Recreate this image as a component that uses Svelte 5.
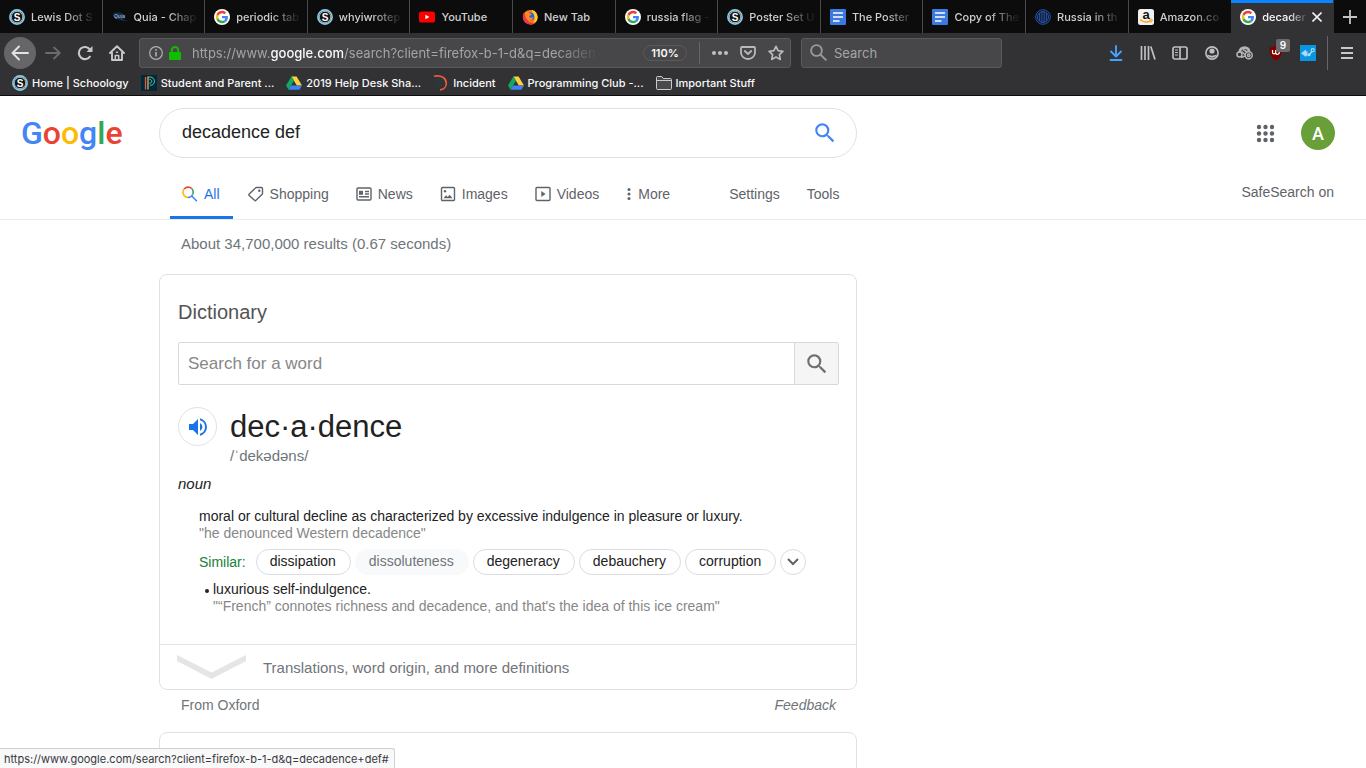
<script>
  const tabs = [
    { icon: 'schoology', title: 'Lewis Dot S' },
    { icon: 'quia', title: 'Quia - Chap' },
    { icon: 'google', title: 'periodic tab' },
    { icon: 'schoology', title: 'whyiwrotep' },
    { icon: 'youtube', title: 'YouTube', whole: true },
    { icon: 'firefox', title: 'New Tab', whole: true },
    { icon: 'google', title: 'russia flag -' },
    { icon: 'schoology', title: 'Poster Set U' },
    { icon: 'docs', title: 'The Poster' },
    { icon: 'docs', title: 'Copy of The' },
    { icon: 'globe', title: 'Russia in th' },
    { icon: 'amazon', title: 'Amazon.co' },
    { icon: 'google', title: 'decaden', active: true }
  ];
  const bookmarks = [
    { icon: 'schoology', title: 'Home | Schoology' },
    { icon: 'powerschool', title: 'Student and Parent ...' },
    { icon: 'drive', title: '2019 Help Desk Sha...' },
    { icon: 'incident', title: 'Incident' },
    { icon: 'drive', title: 'Programming Club -...' },
    { icon: 'folder', title: 'Important Stuff' }
  ];
  const modes = [
    { icon: 'all', title: 'All', active: true },
    { icon: 'shopping', title: 'Shopping' },
    { icon: 'news', title: 'News' },
    { icon: 'images', title: 'Images' },
    { icon: 'videos', title: 'Videos' },
    { icon: 'more', title: 'More' }
  ];
  const synonyms = [
    { word: 'dissipation' },
    { word: 'dissoluteness', muted: true },
    { word: 'degeneracy' },
    { word: 'debauchery' },
    { word: 'corruption' }
  ];
  const dots = [4, 10.5, 17];
  let query = $state('decadence def');
  let word = $state('');
  let address = $state('');
</script>

{#snippet favicon(name)}
  <svg class="fav" viewBox="0 0 16 16" aria-hidden="true">
    {#if name === 'schoology'}
      <circle cx="8" cy="8" r="7.1" fill="#111" stroke="#86cdec" stroke-width="1.7" />
      <circle cx="8" cy="8" r="5.7" fill="none" stroke="#e8f6fc" stroke-width=".7" />
      <text x="8" y="11.6" text-anchor="middle" class="fav-s">S</text>
    {:else if name === 'quia'}
      <ellipse cx="7" cy="7" rx="6.5" ry="3.6" fill="#122a45" transform="rotate(12 7 7)" />
      <path d="M8 8.5c3 2.8 6 3.3 7.6 2.3-1 1.4-5.500 1.600-8.600-1.200z" fill="#17406a" />
      <text x="7.500" y="8.800" text-anchor="middle" class="fav-q">Quia</text>
    {:else if name === 'google'}
      <circle cx="8" cy="8" r="8" fill="#fff" />
      <g transform="translate(1.800 1.800) scale(.258)">
        <path fill="#ea4335" d="M24 9.500c3.540 0 6.710 1.220 9.210 3.600l6.850-6.850C35.900 2.380 30.470 0 24 0 14.620 0 6.510 5.380 2.560 13.220l7.980 6.190C12.430 13.720 17.740 9.500 24 9.500z" />
        <path fill="#4285f4" d="M46.980 24.550c0-1.570-.15-3.090-.38-4.550H24v9.020h12.940c-.58 2.960-2.260 5.480-4.780 7.180l7.730 6c4.510-4.180 7.090-10.360 7.090-17.650z" />
        <path fill="#fbbc05" d="M10.530 28.590A14.500 14.500 0 0 1 9.770 24c0-1.600.27-3.140.76-4.590l-7.980-6.190A24 24 0 0 0 0 24c0 3.880.92 7.540 2.560 10.780z" />
        <path fill="#34a853" d="M24 48c6.480 0 11.930-2.130 15.890-5.810l-7.730-6c-2.150 1.450-4.920 2.300-8.160 2.300-6.260 0-11.570-4.220-13.470-9.910l-7.980 6.190C6.510 42.620 14.620 48 24 48z" />
      </g>
    {:else if name === 'youtube'}
      <rect x="0" y="2.500" width="16" height="11" rx="2.600" fill="#f00" />
      <path d="M6.400 5.700v4.600l4-2.300z" fill="#fff" />
    {:else if name === 'firefox'}
      <circle cx="8.200" cy="8.200" r="7.300" fill="#ff7a1a" />
      <path d="M9.500.7C13.500 1.500 16 5 15.600 9c-.4 3.600-3.200 6.500-7 6.600 3-1.400 4.500-3.600 4.200-6.600-.2-2.500-1.800-3.200-2.200-5C10.300 2.700 9.900 1.700 9.500.7z" fill="#ffcb2e" />
      <path d="M1 5c-.8 5 1.500 9.500 6.500 10.400 2.800.4 5-.9 6-2.400-2.500 1.500-6 1-7.700-1.200C4 9.500 3.700 7 2.300 3.200z" fill="#f0304f" />
      <circle cx="8.300" cy="7.400" r="3.900" fill="#2563d9" />
      <path d="M3.200 3.400c1.600-.6 3.300 0 4.500 1.100 1.500 0 2 .4 1.800 1-.6.800-2 .9-2.400 2 .5 1.600 2.800 1.500 4.200.6-.4 2.400-2.600 3.800-4.900 3.100C3.900 10.300 2.700 6.500 3.200 3.400z" fill="#ff8a1f" />
    {:else if name === 'docs'}
      <rect width="16" height="16" rx="1" fill="#3b78e0" />
      <path d="M3 4h10M3 8h10M3 12h6.500" stroke="#fff" stroke-width="1.700" />
    {:else if name === 'globe'}
      <g fill="none" stroke="#2a5fc4" stroke-width=".9">
        <circle cx="8" cy="8" r="7.300" />
        <circle cx="8" cy="8" r="5.500" />
        <path d="M8 2.500v11" />
        <path d="M6.200 3v10M9.800 3v10M4.400 4.200v7.600M11.600 4.200v7.600" />
      </g>
    {:else if name === 'amazon'}
      <rect width="16" height="16" rx="2.500" fill="#f1f1f1" />
      <text x="8" y="10" text-anchor="middle" class="fav-a">a</text>
      <path d="M2 10.500c3.500 3 8 3.200 11 1.200" fill="none" stroke="#f90" stroke-width="1.500" />
      <path d="M11.300 10.500c1.200-.4 2.800-.4 2.900.1.100.7-.3 1.900-1.100 2.800" fill="none" stroke="#f90" stroke-width="1" />
    {:else if name === 'powerschool'}
      <rect width="16" height="16" fill="#00293c" />
      <path d="M4.500 2v12.500" stroke="#e9573e" stroke-width="1.300" />
      <path d="M7 14.500V2h1.500" fill="none" stroke="#f2c14e" stroke-width="1.200" />
      <path d="M8.500 2c6.500-.2 6.500 8.500.5 8.300M8.500 4.500c3-.2 3 3.700 0 3.700" fill="none" stroke="#5fc6b4" stroke-width="1" />
    {:else if name === 'drive'}
      <path d="M5.400 1.400h5.200L16 10.500h-5.200z" fill="#ffcf3f" />
      <path d="M5.400 1.400 0 10.500l2.600 4.300L8 5.800z" fill="#11a861" />
      <path d="M5.200 10.500H16l-2.600 4.300H2.600z" fill="#3f82f7" />
    {:else if name === 'incident'}
      <path d="M1 1.200c8-1.500 12.500 2.500 12.300 7.300-.1 3.500-2.800 6-6.300 6.400" fill="none" stroke="#f25b37" stroke-width="1.600" />
      <path d="M3 4h6M3 7h7M3 10h6" stroke="#1d4151" stroke-width="1.200" />
    {:else if name === 'folder'}
      <path d="M.5 13.500v-11q0-1 1-1h4.300l1.500 2h7.200q1 0 1 1v9q0 1-1 1h-13q-1 0-1-1zM.5 5.500h15" fill="#4a4a4c" stroke="#c9c9ca" />
    {/if}
  </svg>
{/snippet}

{#snippet lens(color)}
  <svg class="lens" viewBox="0 0 24 24" aria-hidden="true">
    <path fill={color} d="M15.500 14h-.79l-.28-.27A6.470 6.470 0 0 0 16 9.500 6.500 6.500 0 1 0 9.500 16c1.610 0 3.090-.59 4.230-1.570l.27.28v.79l5 4.990L20.490 19zm-6 0C7.010 14 5 11.990 5 9.500S7.010 5 9.500 5 14 7.010 14 9.500 11.990 14 9.500 14z" />
  </svg>
{/snippet}

{#snippet modeIcon(name)}
  {#if name === 'all'}
    <svg width="16" height="16" viewBox="0 0 16 16" fill="none" stroke-width="1.600" aria-hidden="true">
      <path d="M2.100 3.100A5.200 5.200 0 0 1 9.700 2.500" stroke="#ea4335" />
      <path d="M9.700 2.500a5.200 5.200 0 0 1 1.500 3.800 5.200 5.200 0 0 1-.5 2.200" stroke="#34a853" />
      <path d="M10.700 8.500a5.200 5.200 0 0 1-4.700 3M9.500 9.800l5.400 5.400" stroke="#4285f4" />
      <path d="M6 11.500A5.200 5.200 0 0 1 2.100 3.100" stroke="#fbbc05" />
    </svg>
  {:else if name === 'shopping'}
    <svg width="16" height="16" viewBox="0 0 16 16" fill="none" stroke="#5f6368" stroke-width="1.400" aria-hidden="true">
      <path d="M8.300 1.500H13.500q1 0 1 1V7.400q0 .5-.4.900L8 14.300q-.8.700-1.500 0L1.200 9.500q-.7-.8 0-1.600L7.500 1.900q.3-.4.800-.4z" />
      <circle cx="11.300" cy="4.700" r="1.200" fill="#5f6368" stroke="none" />
    </svg>
  {:else if name === 'news'}
    <svg width="16" height="16" viewBox="0 0 16 16" fill="none" stroke="#5f6368" stroke-width="1.400" aria-hidden="true">
      <rect x="1" y="2" width="14" height="12" rx="1" />
      <path d="M9 5.500h4M9 8h4M3 10.800h10" />
      <rect x="3" y="4.800" width="4" height="4" fill="#5f6368" stroke="none" />
    </svg>
  {:else if name === 'images'}
    <svg width="16" height="16" viewBox="0 0 16 16" fill="none" stroke="#5f6368" stroke-width="1.400" aria-hidden="true">
      <rect x="1.500" y="1.500" width="13" height="13" rx="1" />
      <path d="m3.500 12.300 2.600-3 1.600 1.700 2-2.200 2.800 3.500z" fill="#5f6368" stroke="none" />
      <circle cx="5" cy="5.200" r="1.200" fill="#5f6368" stroke="none" />
    </svg>
  {:else if name === 'videos'}
    <svg width="16" height="16" viewBox="0 0 16 16" fill="none" stroke="#5f6368" stroke-width="1.400" aria-hidden="true">
      <rect x="1" y="1.500" width="14" height="13" rx="1" />
      <path d="M6.300 5v6L10.500 8z" fill="#5f6368" stroke="none" />
    </svg>
  {:else}
    <svg width="6" height="16" viewBox="0 0 6 16" fill="#5f6368" aria-hidden="true">
      <circle cx="3" cy="3.500" r="1.500" /><circle cx="3" cy="8" r="1.500" /><circle cx="3" cy="12.500" r="1.500" />
    </svg>
  {/if}
{/snippet}

<div class="window">
  <header class="chrome">
    <div class="tabbar" role="tablist">
      {#each tabs as tab}
        <div class="tab" class:active={tab.active} role="tab" aria-selected={!!tab.active} tabindex="0">
          {@render favicon(tab.icon)}
          <span class="tab-title" class:whole={tab.whole}>{tab.title}</span>
          {#if tab.active}
            <button class="close" aria-label="Close tab">
              <svg width="10" height="10" viewBox="0 0 10 10" stroke="#f0f0f0" stroke-width="1.600"><path d="m.5.500 9 9M9.500.5l-9 9" /></svg>
            </button>
          {/if}
        </div>
      {/each}
      <button class="newtab" aria-label="New tab">
        <svg width="14" height="14" viewBox="0 0 14 14" stroke="#c4c4c5" stroke-width="1.800"><path d="M7 0v14M0 7h14" /></svg>
      </button>
    </div>

    <div class="toolbar">
      <div class="navbtns">
        <button class="back" aria-label="Back">
          <svg width="18" height="16" viewBox="0 0 18 16" fill="none" stroke="#e3e3e4" stroke-width="1.900" stroke-linecap="round" stroke-linejoin="round"><path d="M17 8H1.500M8 1.500 1.500 8 8 14.500" /></svg>
        </button>
        <button class="tool" aria-label="Forward">
          <svg width="16" height="14" viewBox="0 0 16 14" fill="none" stroke="#6b6b6d" stroke-width="1.800" stroke-linecap="round" stroke-linejoin="round"><path d="M1 7h13.500M9 1.500 14.800 7 9 12.500" /></svg>
        </button>
        <button class="tool" aria-label="Reload">
          <svg width="16" height="16" viewBox="0 0 16 16" fill="none" stroke="#c8c8c9" stroke-width="2.100"><path d="M13 4.600A6.100 6.100 0 1 0 13.300 11" /><path d="M15.500 1v6h-6z" fill="#c8c8c9" stroke="none" /></svg>
        </button>
        <button class="tool" aria-label="Home">
          <svg width="16" height="16" viewBox="0 0 16 16" fill="none" stroke="#c8c8c9" stroke-width="1.900" stroke-linejoin="round" stroke-linecap="round"><path d="M1 8 8 1.300 15 8M3 7.500V15h10V7.500" /><path d="M6.300 15v-4.500h3.400V15M7.500 7.300h1" stroke-width="1.500" /></svg>
        </button>
      </div>

      <div class="field urlbar">
        <svg width="14" height="14" viewBox="0 0 14 14" fill="none" stroke="#b1b1b3" aria-hidden="true"><circle cx="7" cy="7" r="6.300" stroke-width="1.200" /><path d="M7 6v4.500M7 3.300v1.500" stroke-width="1.600" /></svg>
        <svg width="12" height="14" viewBox="0 0 12 14" aria-hidden="true"><rect y="6" width="12" height="8" rx="1" fill="#12bc00" /><path d="M2.800 7V4.200a3.200 3.200 0 0 1 6.400 0V7" fill="none" stroke="#12bc00" stroke-width="1.900" /></svg>
        <span class="url">https://www.<b>google.com</b>/search?client=firefox-b-1-d&amp;q=decaden</span>
        <button class="zoom">110%</button>
        <span class="divider"></span>
        <div class="page-actions">
          <button class="page-action" aria-label="Page actions">
            <svg width="16" height="4" viewBox="0 0 16 4" fill="#c0c0c1"><circle cx="2" cy="2" r="2" /><circle cx="8" cy="2" r="2" /><circle cx="14" cy="2" r="2" /></svg>
          </button>
          <button class="page-action" aria-label="Save to Pocket">
            <svg width="16" height="14" viewBox="0 0 16 14" fill="none" stroke="#b9b9ba" stroke-width="1.800" stroke-linecap="round" stroke-linejoin="round"><path d="M2 1h12q1 0 1 1v4.500a7 6.500 0 0 1-14 0V2q0-1 1-1zM4.800 5 8 8l3.200-3" /></svg>
          </button>
          <button class="page-action" aria-label="Bookmark this page">
            <svg width="16" height="16" viewBox="0 0 16 16" fill="none" stroke="#b9b9ba" stroke-width="1.700" stroke-linejoin="round"><path d="m8 1.300 2.100 4.400 4.800.6-3.500 3.300.9 4.800L8 12.100l-4.300 2.300.9-4.800L1.100 6.300l4.800-.6z" /></svg>
          </button>
        </div>
      </div>

      <label class="field searchbar">
        <svg width="17" height="17" viewBox="0 0 17 17" fill="none" stroke="#98989a" stroke-width="1.900" stroke-linecap="round" aria-hidden="true"><circle cx="6.500" cy="6.500" r="5.400" /><path d="m10.600 10.600 5.200 5.200" /></svg>
        <input type="text" placeholder="Search" aria-label="Search the web" bind:value={address} />
      </label>

      <span class="spring"></span>

      <div class="extensions">
        <button class="tool" aria-label="Downloads">
          <svg width="14" height="16" viewBox="0 0 14 16" fill="none" stroke="#45a1ff" stroke-width="1.900" stroke-linecap="round" stroke-linejoin="round"><path d="M7 1v10M2 6.500l5 5 5-5M1.500 15h11" /></svg>
        </button>
        <button class="tool" aria-label="Library">
          <svg width="16" height="14" viewBox="0 0 16 14" stroke="#c0c0c1" stroke-width="1.700"><path d="M1.500 0v14M5 0v14M8.500 0v14M10.800.5 15 13.500" /></svg>
        </button>
        <button class="tool" aria-label="Sidebars">
          <svg width="16" height="14" viewBox="0 0 16 14" fill="none" stroke="#c0c0c1" stroke-width="1.700"><rect x="1" y="1" width="14" height="12" rx="1.800" /><path d="M8 1v12" /><path d="M3 4h3M3 6.500h3M3 9h3" stroke-width="1" /></svg>
        </button>
        <button class="tool" aria-label="Account">
          <svg width="14" height="14" viewBox="0 0 14 14" fill="none"><circle cx="7" cy="7" r="6.100" stroke="#c0c0c1" stroke-width="1.600" /><circle cx="7" cy="5" r="2.600" fill="#c0c0c1" /><path d="M2 8.500c3 1.500 7 1.500 10 0A5.500 5.500 0 0 1 2 8.500z" fill="#c0c0c1" /></svg>
        </button>
        <button class="tool" aria-label="Container extension">
          <svg width="17" height="14" viewBox="0 0 17 14" fill="none" stroke="#b4b4b5" stroke-width="1.500"><path d="M3.500 6.500C4 3 6 1.600 8.500 1.600c3 0 4.500 2 4.500 4" stroke-width="2.800" /><circle cx="3.500" cy="8.500" r="2.500" /><circle cx="12.700" cy="9.300" r="3.500" /><circle cx="12.700" cy="9.300" r="1.200" /><path d="m5.500 5.500 3.500 3M5 11.500 9 10M7 3.500l4 2.500" /></svg>
        </button>
        <button class="tool ublock" aria-label="uBlock Origin">
          <svg width="16" height="16" viewBox="0 0 16 16" fill="none"><path d="M8 .5c2 1.300 4 2 6.500 2C14.500 9 13 13 8 15.500 3 13 1.500 9 1.500 2.500 4 2.500 6 1.800 8 .5z" fill="#800000" /><path d="M4.500 5v2.200q0 1.600 1.600 1.600t1.600-1.600V5v2.200a1.800 1.800 0 1 0 1.800-1.500" stroke="#fff" stroke-width="1.200" /></svg>
          <span class="badge">9</span>
        </button>
        <button class="tool" aria-label="Page tools">
          <svg width="16" height="16" viewBox="0 0 16 16"><rect width="16" height="16" fill="#0996e0" /><path d="M1 8.300 6 4.500v2.300l1.500-.8v5.500L6 10.500V12z" fill="#a9dcf6" /><path d="m8.500 10.200 3.700-4" fill="none" stroke="#a9dcf6" stroke-width="1.500" /><circle cx="12.700" cy="5.200" r="1.600" fill="none" stroke="#a9dcf6" stroke-width="1.100" /><circle cx="9" cy="9.800" r="1.500" fill="#a9dcf6" /></svg>
        </button>
        <span class="divider tall"></span>
        <button class="tool" aria-label="Open menu">
          <svg width="12" height="12" viewBox="0 0 12 12" stroke="#c8c8c9" stroke-width="2"><path d="M0 1h12M0 6h12M0 11h12" /></svg>
        </button>
      </div>
    </div>

    <nav class="bookmarks" aria-label="Bookmarks">
      {#each bookmarks as b}
        <a href="#bookmark">{@render favicon(b.icon)}<span>{b.title}</span></a>
      {/each}
    </nav>
  </header>

  <div class="page">
    <div class="masthead">
      <a class="logo" href="#home" aria-label="Google"><span class="blue">G</span><span class="red">o</span><span class="yellow">o</span><span class="blue">g</span><span class="green">l</span><span class="red">e</span></a>
      <form class="query">
        <input type="text" aria-label="Search" bind:value={query} />
        <button type="button" aria-label="Google Search">{@render lens('#4285f4')}</button>
      </form>
      <div class="account">
        <button class="plain" aria-label="Google apps">
          <svg width="21" height="21" viewBox="0 0 21 21" fill="#5f6368">
            {#each dots as y}{#each dots as x}<circle cx={x} cy={y} r="2.200" />{/each}{/each}
          </svg>
        </button>
        <button class="avatar" aria-label="Google account">A</button>
      </div>
    </div>

    <div class="modebar">
      <nav class="modes" aria-label="Search modes">
        {#each modes as m}
          <a href="#mode" class:current={m.active}>{@render modeIcon(m.icon)}<span>{m.title}</span></a>
        {/each}
        <a href="#settings" class="settings">Settings</a>
        <a href="#tools">Tools</a>
      </nav>
      <a class="safe" href="#safesearch">SafeSearch on</a>
    </div>

    <main class="results">
      <p class="stats">About 34,700,000 results (0.67 seconds)</p>

      <section class="card">
        <div class="card-body">
          <h2>Dictionary</h2>
          <form class="lookup">
            <input type="text" placeholder="Search for a word" aria-label="Search for a word" bind:value={word} />
            <button type="button" aria-label="Look up">{@render lens('#6f6f6f')}</button>
          </form>

          <div class="entry">
            <button class="audio" aria-label="Listen">
              <svg width="24" height="24" viewBox="0 0 24 24" fill="#1a73e8"><path d="M3 9v6h4l5 5V4L7 9zm13.500 3A4.500 4.500 0 0 0 14 7.970v8.050A4.470 4.470 0 0 0 16.500 12zM14 3.230v2.060a7 7 0 0 1 0 13.420v2.060a9 9 0 0 0 0-17.540z" /></svg>
            </button>
            <div>
              <div class="headword">dec·a·dence</div>
              <div class="phonetic">/ˈdekədəns/</div>
            </div>
          </div>

          <div class="pos">noun</div>

          <div class="sense">
            <p>moral or cultural decline as characterized by excessive indulgence in pleasure or luxury.</p>
            <p class="quote">"he denounced Western decadence"</p>
            <div class="similar">
              <span class="similar-label">Similar:</span>
              {#each synonyms as s}
                <button class="chip" class:muted={s.muted}>{s.word}</button>
              {/each}
              <button class="chip round" aria-label="More synonyms">
                <svg width="12" height="8" viewBox="0 0 12 8" fill="none" stroke="#5f6368" stroke-width="2"><path d="m1 1 5 5 5-5" /></svg>
              </button>
            </div>
            <ul>
              <li>
                <p>luxurious self-indulgence.</p>
                <p class="quote">"“French” connotes richness and decadence, and that's the idea of this ice cream"</p>
              </li>
            </ul>
          </div>
        </div>
        <button class="expand">
          <svg width="69" height="24" viewBox="0 0 69 24" fill="#e5e5e5" aria-hidden="true"><path d="M0 0 34.500 17.500 69 0v6L34.500 24 0 6z" /></svg>
          <span>Translations, word origin, and more definitions</span>
        </button>
      </section>

      <div class="credit">
        <a href="#oxford">From Oxford</a>
        <a href="#feedback"><i>Feedback</i></a>
      </div>

      <section class="card next" aria-label="Next result"></section>
    </main>
  </div>

  <div class="status">https://www.google.com/search?client=firefox-b-1-d&amp;q=decadence+def#</div>
</div>

<style>
  :global(body) { margin: 0; background: #fff; }
  .window { display: flex; flex-direction: column; height: 100vh; overflow: hidden; position: relative; font-family: "Liberation Sans", Arial, sans-serif; font-size: 14px; color: #222; }
  .window :global(*) { box-sizing: border-box; }
  button { border: 0; padding: 0; margin: 0; background: none; font: inherit; color: inherit; display: flex; align-items: center; justify-content: center; }
  a { color: inherit; text-decoration: none; }
  svg { display: block; flex: none; }
  p, h2, ul { margin: 0; padding: 0; }
  input { font: inherit; border: 0; padding: 0; background: none; outline: none; min-width: 0; color: inherit; }

  .chrome { background: #323234; border-bottom: 1px solid #0c0c0d; font-family: Inter, sans-serif; flex: none; }
  .fav { width: 16px; height: 16px; }
  .fav-s { font: 700 10px "Liberation Sans", sans-serif; fill: #fff; }
  .fav-q { font: italic 700 5px "Liberation Sans", sans-serif; fill: #8fa3b8; }
  .fav-a { font: 700 13px "Liberation Sans", sans-serif; fill: #111; }

  .tabbar { display: flex; height: 33px; background: #0c0c0d; }
  .tab { flex: 1 1 0; min-width: 0; display: flex; align-items: center; gap: 6px; padding: 0 3px 0 9px; border-right: 1px solid #4a4a4c; color: #d0d0d1; font-size: 11px; font-weight: 500; }
  .tab:nth-last-child(3) { border-right-color: #0c0c0d; }
  .tab-title { flex: 1; min-width: 0; overflow: hidden; white-space: nowrap; line-height: 18px; mask-image: linear-gradient(to right, #000 50%, rgba(0, 0, 0, .1) 90%); }
  .tab-title.whole { mask-image: none; }
  .tab.active { background: #323234; box-shadow: inset 0 3px #0a84ff; border-right-color: #323234; color: #f9f9fa; }
  .active .tab-title { mask-image: linear-gradient(to right, #000 60%, rgba(0, 0, 0, .1)); }
  .close { margin-right: 8px; }
  .newtab { width: 32px; }

  .toolbar { display: flex; align-items: center; height: 39px; padding: 0 3px 0 4px; }
  .navbtns, .extensions, .page-actions { display: flex; align-items: center; }
  .navbtns { margin-right: 6px; }
  .tool { width: 32px; height: 32px; }
  .back { width: 32px; height: 32px; margin-right: 1px; border-radius: 50%; background: #666668; }
  .field { display: flex; align-items: center; height: 30px; background: #474749; border: 1px solid #5a5a5c; border-radius: 3px; min-width: 0; }
  .urlbar { flex: 1 1 652px; padding: 0 0 0 9px; gap: 6px; }
  .url { flex: 1; min-width: 0; margin-left: 5px; overflow: hidden; white-space: nowrap; font-size: 13px; line-height: 20px; color: #a5a5a7; mask-image: linear-gradient(to right, #000 88%, rgba(0, 0, 0, .1) 97%); }
  .url b { font-weight: 500; color: #f9f9fa; }
  .zoom { height: 16px; width: 44px; margin: 0 6px 0 30px; border: 1px solid #5a5a5c; border-radius: 8px; font-size: 11px; font-weight: 600; color: #f9f9fa; }
  .divider { width: 1px; height: 22px; background: #66666a; }
  .tall { height: 34px; margin: 0 3px; }
  .page-action { width: 28px; height: 28px; }
  .searchbar { flex: 1 1 201px; max-width: 201px; margin-left: 10px; padding: 0 8px; gap: 7px; }
  .searchbar input { flex: 1; width: 0; font-size: 13px; color: #f9f9fa; }
  .searchbar input::placeholder { color: #a5a5a7; opacity: 1; }
  .spring { flex: 1 1 98px; max-width: 98px; }
  .ublock { position: relative; }
  .badge { position: absolute; right: 2px; top: 2px; width: 14px; height: 13px; line-height: 13px; background: #6b6b6d; border-radius: 2px; color: #fff; font-size: 10px; font-weight: 600; text-align: center; }

  .bookmarks { display: flex; gap: 12px; height: 23px; padding: 0 12px 2px; align-items: center; font-size: 11px; font-weight: 500; color: #f9f9fa; }
  .bookmarks a { display: flex; align-items: center; gap: 4px; white-space: nowrap; }

  .page { flex: 1; min-height: 0; overflow: hidden; }
  .masthead { display: flex; align-items: center; padding: 12px 31px 0 0; }
  .logo { flex: none; width: 159px; padding-left: 21px; font: 500 32px/48px Roboto, sans-serif; }
  .blue { color: #4285f4; }
  .red { color: #ea4335; }
  .yellow { color: #fbbc05; }
  .green { color: #34a853; }
  .query { display: flex; align-items: center; flex: 0 1 698px; height: 50px; border: 1px solid #dfe1e5; border-radius: 25px; padding: 0 18px 0 22px; }
  .query input { flex: 1; font-size: 18px; color: #222; padding-bottom: 2px; }
  .lens { width: 26px; height: 26px; }
  .account { display: flex; align-items: center; gap: 25px; margin-left: auto; }
  .avatar { width: 34px; height: 34px; border-radius: 50%; background: #689f38; color: #fff; font: 500 18px Roboto, sans-serif; }

  .modebar { display: flex; justify-content: space-between; align-items: flex-end; height: 62px; padding: 0 32px 0 170px; border-bottom: 1px solid #ebebeb; color: #5f6368; }
  .modes { display: flex; gap: 3px; }
  .modes a { display: flex; align-items: center; gap: 6px; height: 50px; padding: 0 12px; white-space: nowrap; }
  .modes a.current { padding-right: 13px; color: #1a73e8; box-shadow: inset 0 -3px #1a73e8; }
  .modes a.settings { margin-left: 32px; }
  .safe { line-height: 54px; white-space: nowrap; }

  .results { max-width: 857px; padding-left: 159px; }
  .stats { padding-left: 22px; margin-bottom: 6px; font-size: 15px; line-height: 48px; color: #70757a; }
  .card { border: 1px solid #dfe1e5; border-radius: 8px; }
  .card-body { padding: 23px 17px 29px 18px; }
  h2 { font-size: 20px; font-weight: 400; line-height: 28px; color: #545454; }
  .lookup { display: flex; height: 43px; margin-top: 16px; border: 1px solid #d9d9d9; border-radius: 2px; }
  .lookup input { flex: 1; padding: 0 9px; font-size: 17px; }
  .lookup input::placeholder { color: #878787; opacity: 1; }
  .lookup button { width: 44px; background: #f5f5f5; border-left: 1px solid #d9d9d9; }
  .entry { display: flex; gap: 13px; margin-top: 22px; }
  .audio { flex: none; width: 39px; height: 39px; border: 1px solid #dfe1e5; border-radius: 50%; }
  .headword { font-size: 31px; line-height: 40px; }
  .phonetic { font-size: 15px; line-height: 17px; color: #70757a; }
  .pos { margin-top: 11px; font-size: 15px; line-height: 17px; font-style: italic; }
  .sense { margin: 16px 0 0 21px; line-height: 17px; }
  .quote { color: #878787; }
  .similar { display: flex; align-items: center; gap: 4px; margin: 7px 0 6px; }
  .similar-label { margin-right: 6px; color: #188038; }
  .chip { height: 26px; padding: 0 13px 1px; border: 1px solid #dadce0; border-radius: 13px; }
  .chip:not(.round) { padding: 0 14px 1px 13px; }
  .chip.muted { background: #f8f9fa; border-color: #f8f9fa; color: #70757a; }
  .chip.round { width: 26px; padding: 0; }
  ul { list-style: none; padding-left: 14px; }
  li { position: relative; }
  li::before { content: ""; position: absolute; left: -8px; top: 8px; width: 4px; height: 4px; border-radius: 50%; background: #222; }
  .expand { width: 100%; height: 45px; padding: 0 17px; justify-content: flex-start; gap: 17px; border-top: 1px solid #e5e5e5; font-size: 15px; color: #70757a; }
  .credit { display: flex; justify-content: space-between; padding: 0 21px 0 22px; margin-bottom: 12px; line-height: 30px; color: #70757a; }
  .next { height: 160px; }

  .status { position: absolute; left: 0; bottom: 0; height: 20px; padding: 0 5px 0 4px; background: #f9f9fa; border: 1px solid #d0d0d0; border-width: 1px 1px 0 0; border-radius: 0 3px 0 0; font: 11px/20px Inter, sans-serif; color: #38383d; white-space: nowrap; }
</style>
